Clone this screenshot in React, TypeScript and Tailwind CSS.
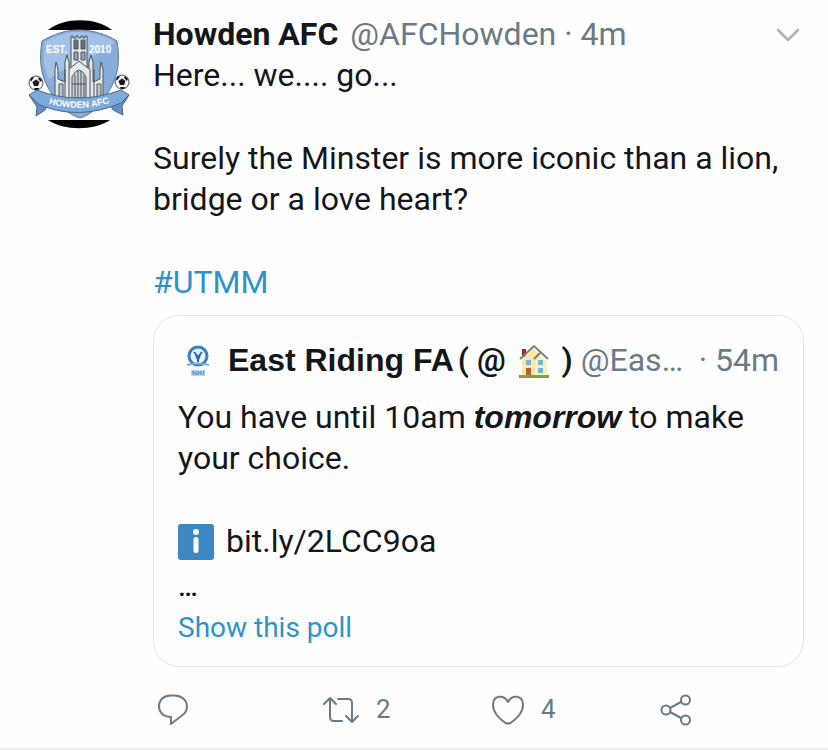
import React from "react";

function CrestIcon() {
  return (
    <svg viewBox="0 0 108 112" className="h-[112px] w-[108px]" role="img" aria-label="Howden AFC crest">
      <path d="M20 11C36-2 68-2 84 11Z" fill="#000" />
      <path d="M20 101C36 112 66 112 82 101Z" fill="#000" />
      <path d="M51 11C38 11 26 15 14 22C11 40 12 56 22 72C29 84 40 96 52 99C64 96 74 84 81 72C91 56 92 40 89 22C78 15 64 11 51 11Z" fill="#86add9" stroke="#66788f" strokeWidth="1" />
      <path d="M51 13C40 13 28 16 17 23C15 36 15 48 21 61C36 46 70 40 87 23C76 16 62 13 51 13Z" fill="#a9c6e9" opacity=".8" />
      <g fill="#e6e9ec" stroke="#4b525b" strokeWidth="1">
        <path d="M43 62V17h2v2h3v-2h2v2h3v-2h2v2h2v-2h2v45Z" />
        <path d="M46 21h4v9h-4zM53 21h4v9h-4z" fill="#69727d" />
        <path d="M46 33h4v8h-4zM53 33h4v8h-4z" fill="#9aa3ad" />
        <path d="M27 79V50l1-7 2 7v10l7 3V43l2-7 2 7v7l10-8 10 8v-7l2-7 2 7v20l7-3V50l1-7 2 7v29Z" />
        <path d="M31 65h4v14h-4zM69 65h4v14h-4z" fill="#bcc3cb" />
        <path d="M37 50v29M41 50v29M62 50v29M66 50v29" />
        <path d="M44 79V58q7-14 14 0v21Z" fill="#cbd1d8" />
        <path d="M47 79V56M50 79V52M53 79V52M56 79V56M44 65h14" />
      </g>
      <g fill="#fff" fontFamily="Liberation Sans, sans-serif" fontWeight="700" fontSize="10">
        <text x="18" y="34">EST.</text>
        <text x="61" y="34">2010</text>
      </g>
      <g fill="#f5f6f7" stroke="#4b4f55" strokeWidth="1">
        <circle cx="8" cy="64" r="7" />
        <circle cx="94" cy="63" r="7" />
      </g>
      <g fill="#15171a">
        <path d="m8 60.500 3.500 2.500-1.500 4H6l-1.500-4zM2 61l2-3 2 .5-3 4zM11 58l3 3-1 2-3-3zM6 69h5l-1 2H7z" />
        <path d="m94 59.500 3.500 2.500-1.500 4h-4l-1.500-4zM88 60l2-3 2 .5-3 4zM97 57l3 3-1 2-3-3zM92 68h5l-1 2h-3z" />
      </g>
      <path d="M1 76l20 7-4 8-9 6 1-9ZM101 76l-20 7 4 8 10 5-1-9Z" fill="#6290c4" stroke="#4b6688" strokeWidth="1" />
      <path d="M1 76L9 71Q50 87 93 71L101 76 93 84Q51 102 12 86Z" fill="#7eaadb" stroke="#4b6688" strokeWidth="1" />
      <path id="crest-band" d="M10 81Q51 97 92 80" fill="none" />
      <text fill="#fff" fontFamily="Liberation Sans, sans-serif" fontWeight="700" fontSize="9">
        <textPath href="#crest-band" startOffset="50%" textAnchor="middle">HOWDEN AFC</textPath>
      </text>
    </svg>
  );
}

function BadgeIcon() {
  return (
    <svg viewBox="0 0 24 34" className="h-[34px] w-6 shrink-0" role="img" aria-label="East Riding FA">
      <circle cx="12" cy="12" r="9" fill="#e8f3fb" stroke="#3c7fc0" strokeWidth="3" />
      <path d="M1 21q11-3 22 0" stroke="#79aede" strokeWidth="2" fill="none" />
      <path d="M8 8l4 5 4-5M12 12v6M10 11l2 5 2-5" stroke="#2869ad" strokeWidth="2" fill="none" />
      <path d="M5 26h14v6H5z" fill="#b7d7ef" />
      <path d="M7 31v-4l3 4v-4M12 27v4M15 27v4M12 29h3M18 27l-1 4" stroke="#4c8dc8" fill="none" />
    </svg>
  );
}

function HouseIcon() {
  return (
    <svg viewBox="0 0 32 34" className="h-[34px] w-8 shrink-0" role="img" aria-label="house">
      <path d="M4 5h4v8H4z" fill="#a5212d" />
      <path d="M4 15L15 4l13 13v14H4z" fill="#fbe7a9" />
      <path d="M17 17l5-6 7 6v14H17z" fill="#fdedb9" />
      <path d="M2 15L16 2l14 13M16 15l6-6" fill="none" stroke="#7b7e80" strokeWidth="2" />
      <path d="M8 16h5v5H8zM20 16h5v5h-5zM20 24h5v5h-5z" fill="#6fb7d7" />
      <path d="M8 24h5v7H8z" fill="#bd5a35" />
      <path d="M1 31h30v3H1z" fill="#77a73d" />
    </svg>
  );
}

const stroke = { fill: "none", stroke: "currentColor", strokeWidth: 2, strokeLinecap: "round", strokeLinejoin: "round" } as const;

export default function App() {
  return (
    <main className="min-h-screen bg-[#fefefe] font-[Roboto,sans-serif] text-[32px] leading-[41px] text-[#14171a]">
      <article className="border-b-2 border-[#e8ebef] pt-[14px] pr-6 pl-[28px]">
        <div className="flex">
          <div className="w-[125px] shrink-0 pt-[5px]"><CrestIcon /></div>
          <div className="min-w-0 flex-1">
            <header className="flex items-center justify-between">
              <div className="flex min-w-0 gap-3 whitespace-nowrap">
                <strong className="font-bold">Howden AFC</strong>
                <span className="text-[#6b7a86]">@AFCHowden · 4m</span>
              </div>
              <button aria-label="More options" className="mr-1 text-[#a7b3ba]">
                <svg viewBox="0 0 24 16" className="h-4 w-6" {...stroke} strokeWidth={2.5}><path d="m2 3 10 10L22 3" /></svg>
              </button>
            </header>
            <p>Here... we.... go...</p>
            <p className="mt-[42px]">Surely the Minster is more iconic than a lion, bridge or a love heart?</p>
            <p className="mt-[42px]"><a href="#utmm" className="text-[#2f92cb]">#UTMM</a></p>
            <section className="mt-3 rounded-[26px] border border-[#dfe4e8] px-6 pt-6 pb-[18px]">
              <div className="flex items-center whitespace-nowrap">
                <span className="flex w-[50px] shrink-0 pl-2"><BadgeIcon /></span>
                <strong className="flex items-center font-bold">
                  <span className="font-['Liberation_Sans',sans-serif]">East Riding FA</span>
                  <span className="mr-3 ml-1 font-semibold">( @</span>
                  <HouseIcon />
                  <span className="mr-2 ml-3 font-semibold">)</span>
                </strong>
                <span className="text-[#6b7a86]">@Eas…</span>
                <span className="ml-auto text-[#6b7a86]">· 54m</span>
              </div>
              <p className="mt-4">You have until 10am <strong className="font-['Liberation_Sans',sans-serif] font-bold italic">tomorrow</strong> to make your choice.</p>
              <p className="mt-[42px] flex items-center gap-3">
                <svg viewBox="0 0 36 36" className="size-9" role="img" aria-label="information">
                  <rect width="36" height="36" rx="3" fill="#3b88c3" />
                  <circle cx="18" cy="8" r="3" fill="#fff" />
                  <rect x="15.500" y="13" width="5" height="16" rx="2.500" fill="#fff" />
                </svg>
                <a href="#link">bit.ly/2LCC9oa</a>
              </p>
              <p className="mt-1 text-[28px] font-medium">…</p>
              <a href="#poll" className="block text-[28px] text-[#2f92cb]">Show this poll</a>
            </section>
          </div>
        </div>
        <footer className="ml-[125px] grid h-[81px] grid-cols-[169px_169px_169px_1fr] items-center pt-1 text-[26px] text-[#6b7a86]">
          <button aria-label="Reply" className="flex pl-1">
            <svg viewBox="0 0 34 34" className="size-[34px]" {...stroke}><path d="M14 24C6 24 2 19 2 13.500C2 7 7 2.500 13.500 2.500h4C24 2.500 30 7 30 13.500c0 5-3 8-7 10.500l-9 7Z" /></svg>
          </button>
          <button aria-label="Retweet" className="flex items-center gap-4">
            <svg viewBox="0 0 38 30" className="h-[30px] w-[38px]" {...stroke}><path d="M2 9l6-6 6 6M8 4v18q0 4 4 4h8M16 4h10q4 0 4 4v18M24 21l6 6 6-6" /></svg>
            <span>2</span>
          </button>
          <button aria-label="Like" className="flex items-center gap-4">
            <svg viewBox="0 0 34 32" className="h-8 w-[34px]" {...stroke}><path d="M17 8C13 0 2 1 2 11c0 8 8 15 12.500 18q2.500 1 5 0C24 26 32 19 32 11 32 1 21 0 17 8Z" /></svg>
            <span>4</span>
          </button>
          <button aria-label="Share" className="flex">
            <svg viewBox="0 0 32 32" className="size-8" {...stroke}><circle cx="6" cy="16" r="4.500" /><circle cx="25.500" cy="6" r="4.500" /><circle cx="25.500" cy="26" r="4.500" /><path d="m10 14 11-6M10 18l11 6" /></svg>
          </button>
        </footer>
      </article>
    </main>
  );
}
